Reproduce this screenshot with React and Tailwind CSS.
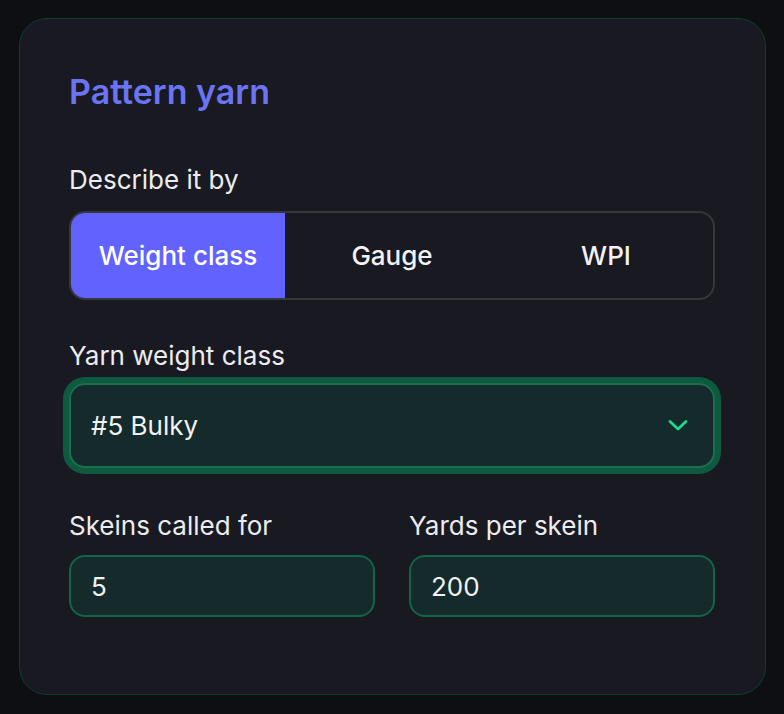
import React, { useState } from "react";

const font = { fontFamily: "Inter, 'Noto Sans', sans-serif" };

export default function App() {
  const [mode, setMode] = useState("weight");
  const tabs = [
    { id: "weight", label: "Weight class" },
    { id: "gauge", label: "Gauge" },
    { id: "wpi", label: "WPI" },
  ];
  return (
    <div className="min-h-[714px] w-full bg-[#0e0f13] pt-[18px] pl-[19px] pr-[18px] pb-[19px]" style={font}>
      <div className="w-[747px] h-[677px] rounded-[28px] border border-[#0e3d2e] bg-[#191a21] pl-[49px] pr-[50px] pt-[53px]">
        <h1 className="text-[34px] leading-[40px] font-semibold text-[#6b74f2]">Pattern yarn</h1>

        <div className="mt-[52px] text-[26px] leading-[32px] text-[#ececf0]">Describe it by</div>
        <div className="mt-[15px] flex h-[89px] rounded-[16px] border-2 border-[#36373d] overflow-hidden">
          {tabs.map((t) => (
            <button
              key={t.id}
              onClick={() => setMode(t.id)}
              className={
                "flex-1 flex items-center justify-center text-[26px] font-medium " +
                (mode === t.id ? "bg-[#6262ff] text-white" : "text-[#f2f2f5]")
              }
            >
              {t.label}
            </button>
          ))}
        </div>

        <div className="mt-[40px] text-[26px] leading-[32px] text-[#ececf0]">Yarn weight class</div>
        <div className="mt-[11px] flex h-[85px] items-center justify-between rounded-[16px] border-2 border-[#1b6e50] bg-[#152a2b] pl-[20px] pr-[24px] shadow-[0_0_0_6px_#0d5a3f]">
          <span className="text-[26px] text-[#f1f2f4]">#5 Bulky</span>
          <svg width="22" height="13" viewBox="0 0 22 13" fill="none">
            <path d="M3 2.5l8 7.5 8-7.5" stroke="#1fd98f" strokeWidth="2.8" strokeLinecap="round" strokeLinejoin="round" />
          </svg>
        </div>

        <div className="mt-[42px] grid grid-cols-2 gap-x-[34px]">
          <div>
            <div className="text-[26px] leading-[32px] text-[#ececf0]">Skeins called for</div>
            <div className="mt-[13px] flex h-[62px] items-center rounded-[16px] border-2 border-[#10654a] bg-[#152a2b] pl-[20px] text-[26px] text-[#f1f2f4]">5</div>
          </div>
          <div>
            <div className="text-[26px] leading-[32px] text-[#ececf0]">Yards per skein</div>
            <div className="mt-[13px] flex h-[62px] items-center rounded-[16px] border-2 border-[#10654a] bg-[#152a2b] pl-[20px] text-[26px] text-[#f1f2f4]">200</div>
          </div>
        </div>
      </div>
    </div>
  );
}
